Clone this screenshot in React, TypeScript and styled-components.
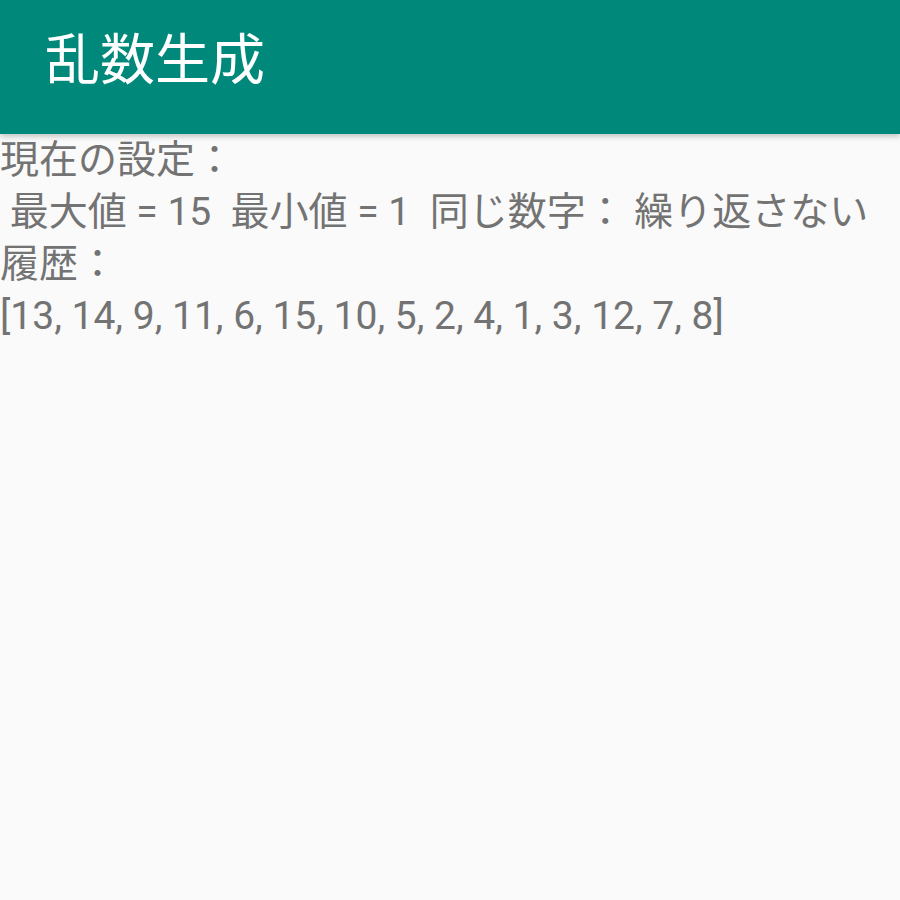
import React from "react";
import styled, { createGlobalStyle } from "styled-components";

const GlobalStyle = createGlobalStyle`
  html, body {
    margin: 0;
    padding: 0;
    background: #fafafa;
  }
  body {
    font-family: Roboto, "Noto Sans CJK JP", sans-serif;
  }
`;

const Screen = styled.div`
  width: 900px;
  min-height: 900px;
  background: #fafafa;
`;

const AppBar = styled.header`
  height: 134px;
  background: #00897b;
  display: flex;
  align-items: center;
  padding-left: 45px;
  box-shadow: 0 2px 6px rgba(0, 0, 0, 0.25);
  position: relative;
`;

const Title = styled.h1`
  margin: 0;
  margin-top: -24px;
  color: #ffffff;
  font-family: Roboto, "Noto Sans CJK JP", sans-serif;
  font-weight: 400;
  font-size: 55px;
`;

const Body = styled.main`
  padding-top: 0;
`;

const Line = styled.div<{ $size?: number }>`
  color: #737373;
  font-size: ${(p) => p.$size ?? 39}px;
  line-height: 52px;
  white-space: pre;
`;

const history = [13, 14, 9, 11, 6, 15, 10, 5, 2, 4, 1, 3, 12, 7, 8];

export default function App() {
  return (
    <Screen>
      <GlobalStyle />
      <AppBar>
        <Title>乱数生成</Title>
      </AppBar>
      <Body>
        <Line>現在の設定：</Line>
        <Line> 最大値 = 15  最小値 = 1  同じ数字： 繰り返さない</Line>
        <Line>履歴：</Line>
        <Line>[{history.join(", ")}]</Line>
      </Body>
    </Screen>
  );
}
